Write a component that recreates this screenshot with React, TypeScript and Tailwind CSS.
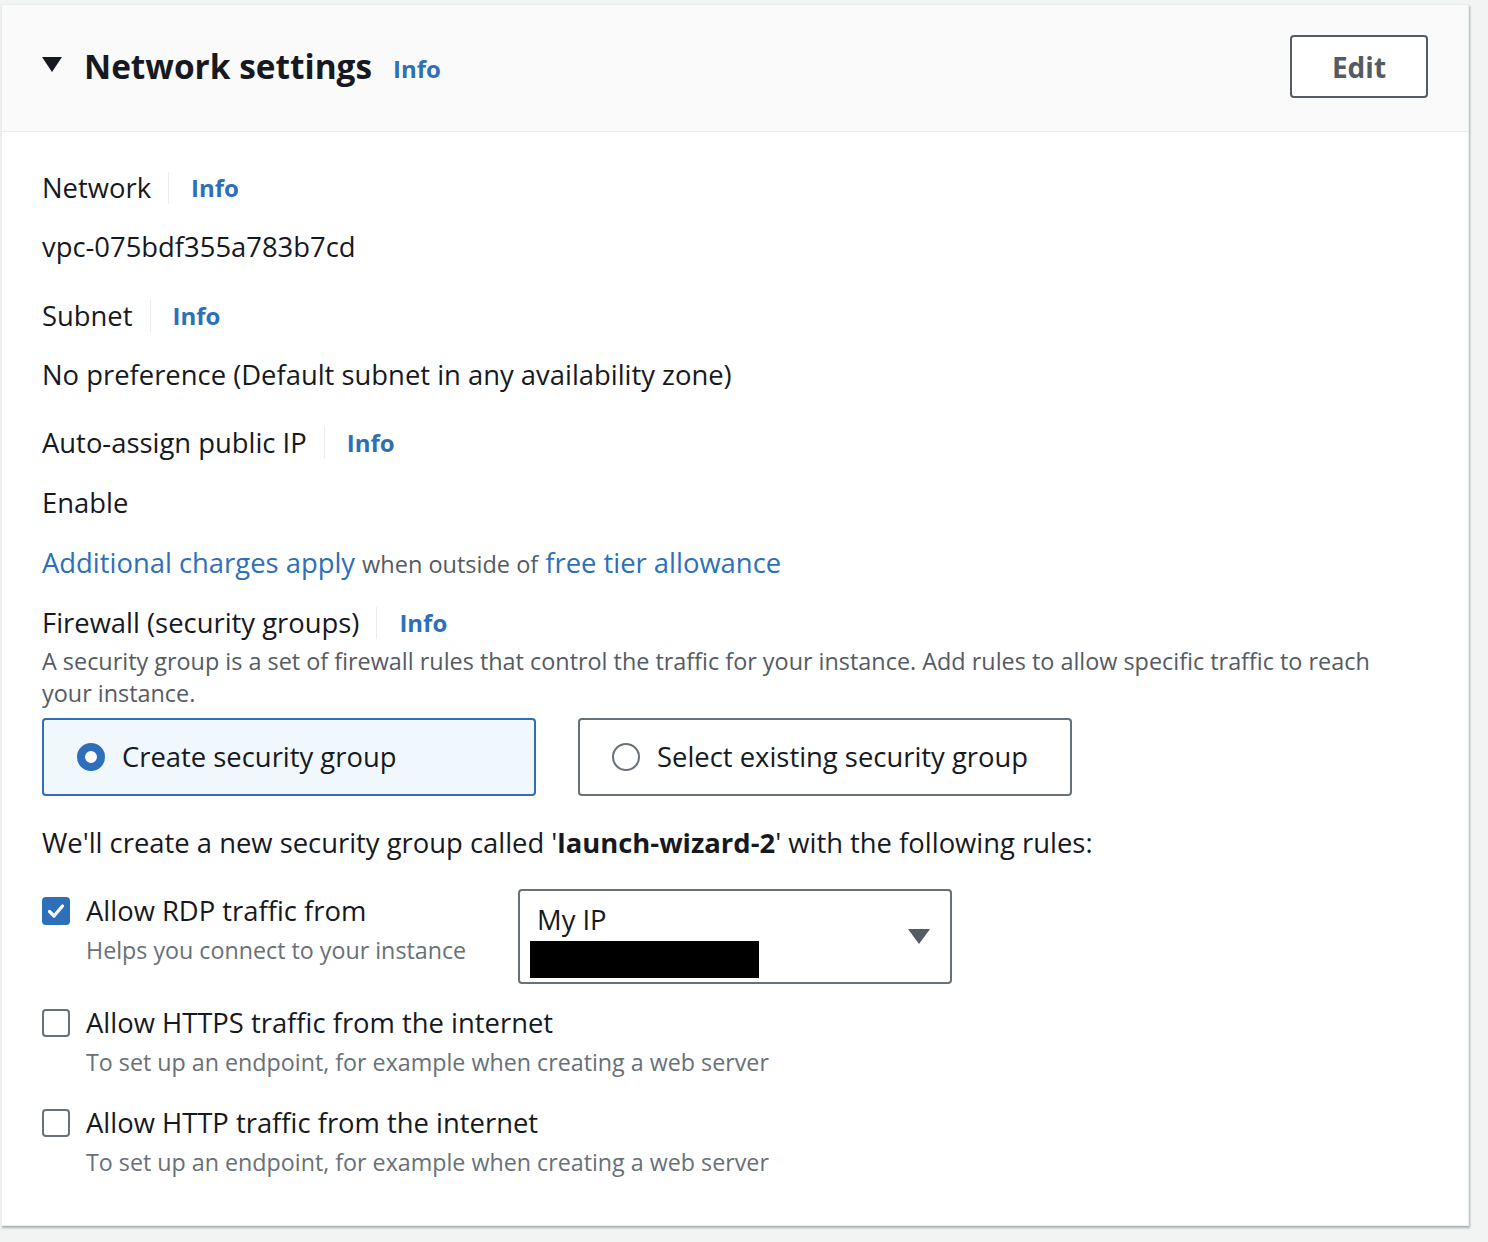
import React from "react";

const font = { fontFamily: '"Open Sans", "Noto Sans", sans-serif' };

const InfoLink = ({ className = "" }: { className?: string }) => (
  <span className={`text-[24px] font-bold text-[#2d6fb9] ${className}`}>Info</span>
);

const FieldLabel = ({ label, top }: { label: string; top: string }) => (
  <div className={`flex items-center h-[40px] ${top}`}>
    <span className="text-[27.4px] text-[#16191f] leading-[40px]">{label}</span>
    <span className="ml-[17px] mr-[22px] w-px h-[32px] bg-[#eaeded]" />
    <InfoLink />
  </div>
);

const Checkbox = ({ checked }: { checked?: boolean }) =>
  checked ? (
    <span className="flex items-center justify-center w-[28px] h-[28px] rounded-[4px] bg-[#2d6fb9] shrink-0">
      <svg width="20" height="20" viewBox="0 0 20 20">
        <path d="M3.5 10.5 L8 15 L16.5 5" fill="none" stroke="#fff" strokeWidth="3.2" strokeLinecap="round" strokeLinejoin="round" />
      </svg>
    </span>
  ) : (
    <span className="block w-[28px] h-[28px] rounded-[4px] border-2 border-[#687078] bg-white shrink-0" />
  );

const Rule = ({ title, desc, checked, top }: { title: string; desc: string; checked?: boolean; top: string }) => (
  <div className={`flex ${top}`}>
    <div className="mt-[6px]">
      <Checkbox checked={checked} />
    </div>
    <div className="ml-[16px]">
      <div className="text-[27.4px] leading-[40px] text-[#16191f]">{title}</div>
      <div className="text-[23.25px] leading-[32px] text-[#687078] mt-[3px]">{desc}</div>
    </div>
  </div>
);

export default function App() {
  return (
    <div className="min-h-screen bg-[#f2f3f3] pt-[4px] pl-[1px]" style={font}>
      <div className="w-[1468px] bg-white border border-[#eaeded] shadow-[1px_2px_2px_rgba(0,28,36,0.3)]">
        <div className="h-[127px] bg-[#fafafa] border-b border-[#eaeded] flex items-start justify-between pl-[40px] pr-[40px] pt-[30px]">
          <div className="flex items-center mt-[7px]">
            <svg width="20" height="16" viewBox="0 0 20 16" className="-mt-[2px]">
              <path d="M0 0 H20 L10 15 Z" fill="#16191f" />
            </svg>
            <h2 className="ml-[22px] text-[33.4px] font-bold text-[#16191f] leading-[48px]">Network settings</h2>
            <InfoLink className="ml-[21px] mt-[5px] text-[23px]" />
          </div>
          <button className="w-[138px] h-[63px] rounded-[4px] border-2 border-[#545b64] bg-white text-[28px] font-bold text-[#545b64]">
            Edit
          </button>
        </div>

        <div className="pl-[40px] pr-[40px] pt-[36px] pb-[47px]">
          <FieldLabel label="Network" top="" />
          <div className="mt-[19px] text-[27.4px] leading-[40px] text-[#16191f]">vpc-075bdf355a783b7cd</div>

          <FieldLabel label="Subnet" top="mt-[29px]" />
          <div className="mt-[19px] text-[27.4px] leading-[40px] text-[#16191f]">
            No preference (Default subnet in any availability zone)
          </div>

          <FieldLabel label="Auto-assign public IP" top="mt-[28px]" />
          <div className="mt-[20px] text-[27.4px] leading-[40px] text-[#16191f]">Enable</div>

          <div className="mt-[20px] h-[40px] flex items-baseline gap-[7px] leading-[40px]">
            <span className="text-[27.4px] text-[#2d6fb9]">Additional charges apply</span>
            <span className="text-[23.5px] text-[#545b64]">when outside of</span>
            <span className="text-[27.4px] text-[#2d6fb9]">free tier allowance</span>
          </div>

          <div className="mt-[20px] flex items-center h-[40px]">
            <span className="text-[27.4px] text-[#16191f]">Firewall (security groups)</span>
            <span className="ml-[17px] mr-[22px] w-px h-[32px] bg-[#eaeded]" />
            <InfoLink />
          </div>
          <p className="mt-[2px] text-[23.4px] leading-[32px] text-[#545b64] max-w-[1350px]">
            A security group is a set of firewall rules that control the traffic for your instance. Add rules to allow specific traffic to reach your instance.
          </p>

          <div className="mt-[9px] flex gap-[42px]">
            <div className="w-[494px] h-[78px] rounded-[4px] border-2 border-[#2d6fb9] bg-[#f1f8fd] flex items-center pl-[33px]">
              <span className="w-[28px] h-[28px] rounded-full border-[8px] border-[#2d6fb9] bg-white" />
              <span className="ml-[17px] text-[27.4px] text-[#16191f]">Create security group</span>
            </div>
            <div className="w-[494px] h-[78px] rounded-[4px] border-2 border-[#687078] bg-white flex items-center pl-[32px]">
              <span className="w-[28px] h-[28px] rounded-full border-2 border-[#687078] bg-white" />
              <span className="ml-[17px] text-[27.4px] text-[#16191f]">Select existing security group</span>
            </div>
          </div>

          <div className="mt-[27px] text-[27.4px] leading-[40px] text-[#16191f]">
            We'll create a new security group called '<span className="font-bold">launch-wizard-2</span>' with the following rules:
          </div>

          <div className="mt-[28px] flex items-start">
            <div className="w-[476px]">
              <Rule title="Allow RDP traffic from" desc="Helps you connect to your instance" checked top="" />
            </div>
            <div className="-mt-[2px] w-[434px] h-[95px] rounded-[4px] border-2 border-[#687078] bg-white flex items-start justify-between pl-[10px] pr-[20px] pt-[11px]">
              <div>
                <div className="pl-[7px] text-[27.4px] leading-[36px] text-[#16191f]">My IP</div>
                <div className="mt-[3px] w-[229px] h-[37px] bg-black" />
              </div>
              <svg width="22" height="15" viewBox="0 0 22 15" className="mt-[27px]">
                <path d="M0 0 H22 L11 15 Z" fill="#545b64" />
              </svg>
            </div>
          </div>

          <Rule
            title="Allow HTTPS traffic from the internet"
            desc="To set up an endpoint, for example when creating a web server"
            top="mt-[19px]"
          />
          <Rule
            title="Allow HTTP traffic from the internet"
            desc="To set up an endpoint, for example when creating a web server"
            top="mt-[25px]"
          />
        </div>
      </div>
    </div>
  );
}
